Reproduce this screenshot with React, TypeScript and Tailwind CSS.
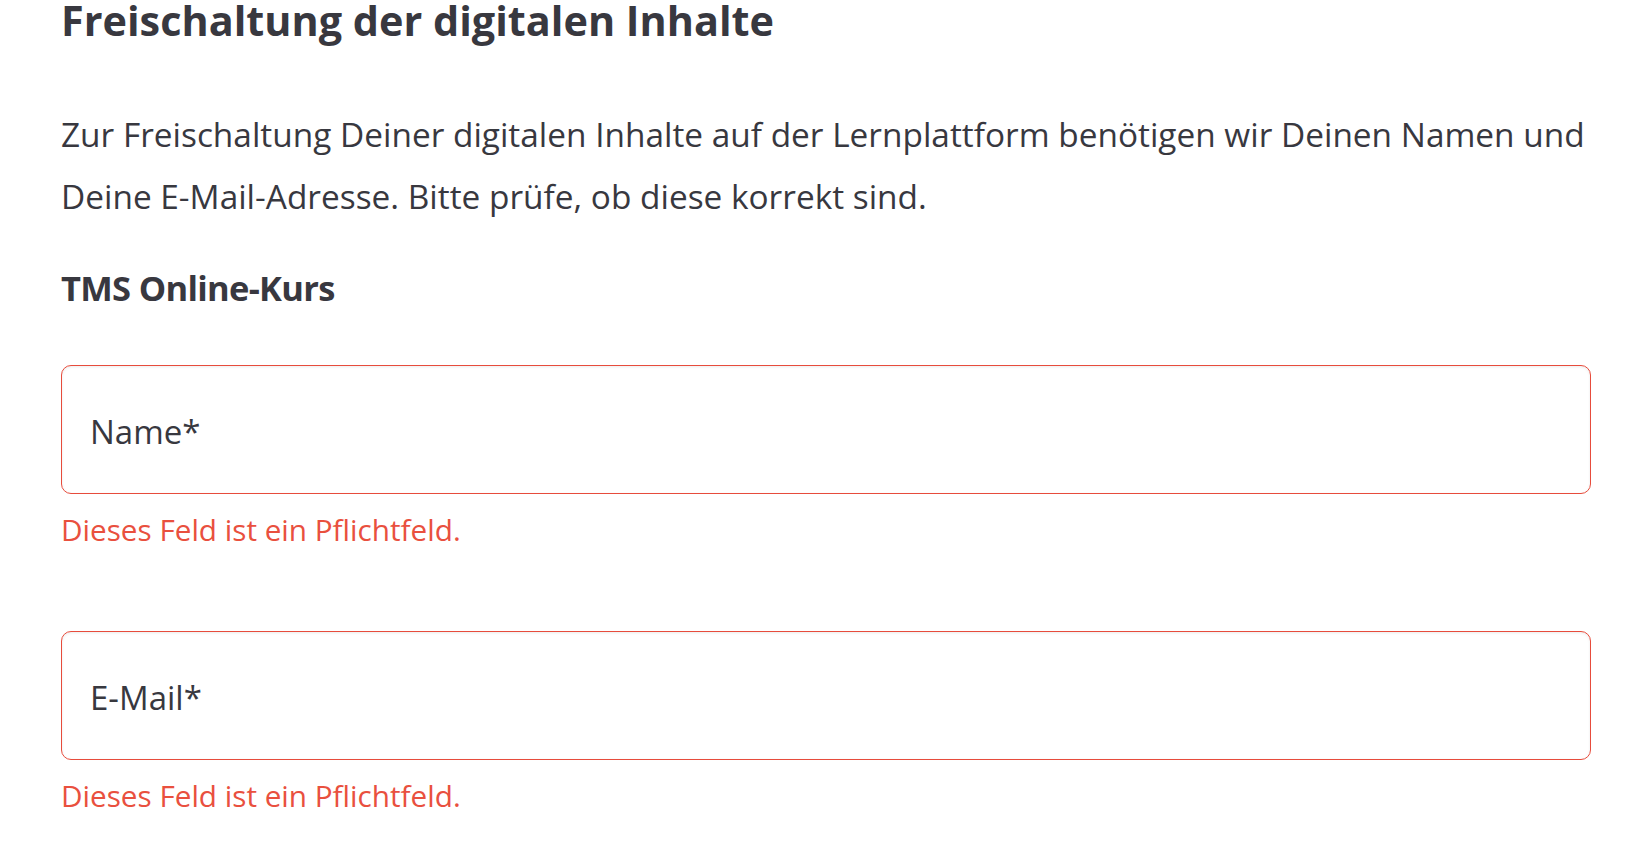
const font = '"Open Sans", "Noto Sans", sans-serif';

function Field({ label }: { label: string }) {
	return (
		<div>
			<div className="flex h-[129px] items-center rounded-[10px] border border-[#e74c3c] bg-white pl-[28px] pt-[4px] shadow-[inset_0_1px_3px_rgba(0,0,0,0.08)]">
				<span className="text-[33px] leading-[42px] text-[#38383f]">{label}</span>
			</div>
			<p className="mt-[18px] text-[29.7px] leading-[36px] text-[#e9503e]">Dieses Feld ist ein Pflichtfeld.</p>
		</div>
	);
}

export default function App() {
	return (
		<div className="min-h-[854px] bg-white pt-px" style={{ fontFamily: font }}>
			<div className="-mt-px ml-[61px] w-[1530px] text-[#38383f]">
				<h1 className="text-[41.4px] font-bold leading-[40px]">Freischaltung der digitalen Inhalte</h1>
				<p className="mt-[63px] text-[33.4px] leading-[62px]">
					Zur Freischaltung Deiner digitalen Inhalte auf der Lernplattform benötigen wir Deinen Namen und Deine
					E-Mail-Adresse. Bitte prüfe, ob diese korrekt sind.
				</p>
				<h2 className="mt-[43px] text-[34.5px] font-bold leading-[36px] tracking-[-0.7px]">TMS Online-Kurs</h2>
				<div className="mt-[59px]">
					<Field label="Name*" />
				</div>
				<div className="mt-[83px]">
					<Field label="E-Mail*" />
				</div>
			</div>
		</div>
	);
}
